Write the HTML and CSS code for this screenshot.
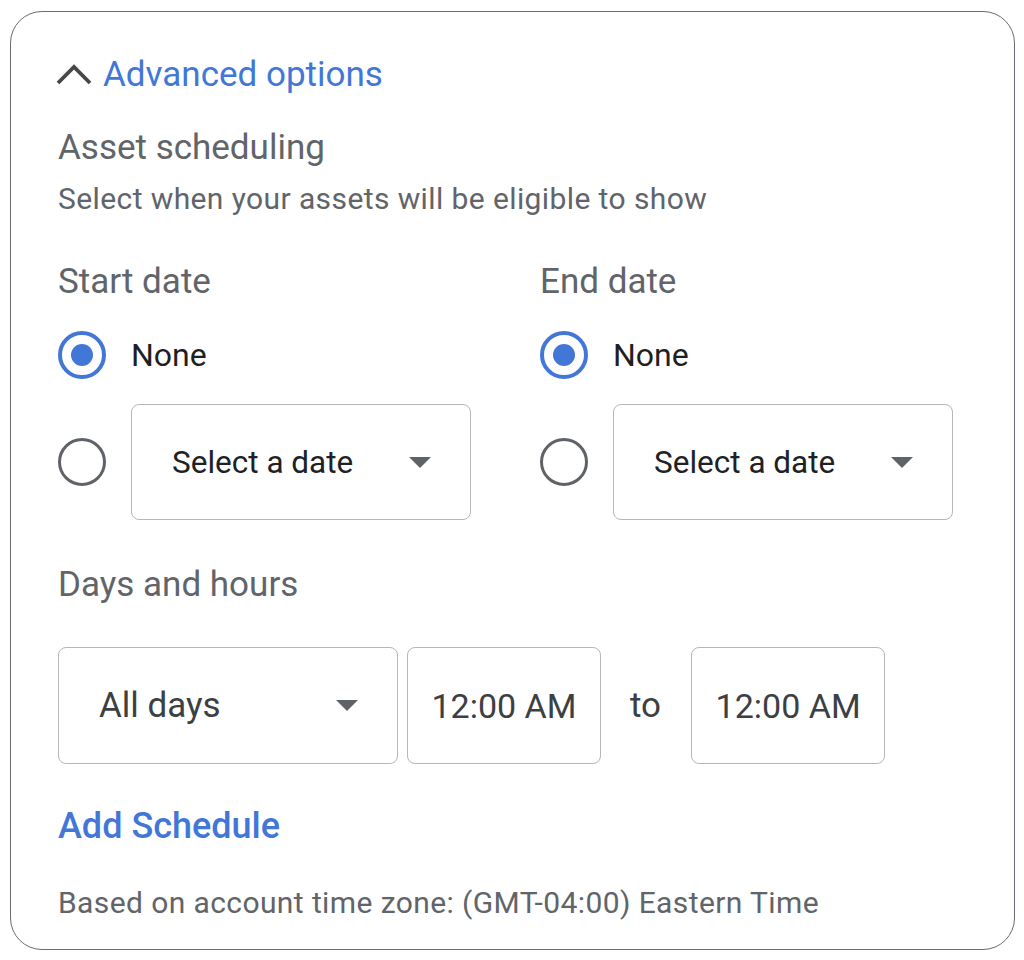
FILE: index.html
```html
<!DOCTYPE html>
<html lang="en">
<head>
    <meta charset="UTF-8">
    <title>Advanced options</title>
    <link rel="stylesheet" href="styles.css">
</head>
<body>
    <div class="card">
        <div class="header">
            <svg class="chevron" width="40" height="24" viewBox="0 0 40 24">
                <polyline points="3,21 19,5 35,21" fill="none" stroke="#474747" stroke-width="3.8"/>
            </svg>
            <span class="link">Advanced options</span>
        </div>

        <div class="title">Asset scheduling</div>
        <div class="subtitle">Select when your assets will be eligible to show</div>

        <div class="dates">
            <div class="date-col">
                <div class="label">Start date</div>
                <div class="radio-row first">
                    <span class="radio checked"></span>
                    <span class="option">None</span>
                </div>
                <div class="radio-row">
                    <span class="radio"></span>
                    <div class="select">
                        <span>Select a date</span>
                        <span class="arrow"></span>
                    </div>
                </div>
            </div>
            <div class="date-col">
                <div class="label">End date</div>
                <div class="radio-row first">
                    <span class="radio checked"></span>
                    <span class="option">None</span>
                </div>
                <div class="radio-row">
                    <span class="radio"></span>
                    <div class="select">
                        <span>Select a date</span>
                        <span class="arrow"></span>
                    </div>
                </div>
            </div>
        </div>

        <div class="label days-label">Days and hours</div>
        <div class="hours">
            <div class="select days">
                <span>All days</span>
                <span class="arrow"></span>
            </div>
            <div class="time">12:00 AM</div>
            <span class="to">to</span>
            <div class="time">12:00 AM</div>
        </div>

        <div class="link add">Add Schedule</div>
        <div class="subtitle footer">Based on account time zone: (GMT-04:00) Eastern Time</div>
    </div>
</body>
</html>
```

FILE: styles.css
```css
* {
    margin: 0;
    padding: 0;
    box-sizing: border-box;
}

body {
    font-family: Roboto, "Liberation Sans", sans-serif;
    background: #fff;
}

.card {
    margin: 11px 9px 0 10px;
    height: 939px;
    border: 1.5px solid #696c73;
    border-radius: 32px;
    padding: 42px 0 0 47px;
}

.header {
    display: flex;
    align-items: center;
    height: 40px;
}

.chevron {
    margin-left: -3px;
    margin-right: 8px;
}

.link {
    color: #4277d8;
    font-size: 35px;
}

.title {
    color: #616469;
    font-size: 35px;
    line-height: 36px;
    margin-top: 36px;
}

.subtitle {
    color: #616469;
    font-size: 30px;
    line-height: 30px;
    letter-spacing: 0.4px;
    margin-top: 18px;
}

.dates {
    display: flex;
}

.date-col {
    flex: none;
    width: 482px;
}

.label {
    color: #616469;
    font-size: 35px;
    line-height: 36px;
    margin-top: 50px;
}

.radio-row {
    display: flex;
    align-items: center;
    gap: 25px;
    margin-top: 25px;
}

.radio-row.first {
    margin-top: 31px;
}

.radio {
    width: 48px;
    height: 48px;
    border-radius: 50%;
    border: 3px solid #5f6368;
    display: flex;
    align-items: center;
    justify-content: center;
    flex-shrink: 0;
}

.radio.checked {
    border: 4px solid #4277d8;
}

.radio.checked::after {
    content: "";
    width: 22px;
    height: 22px;
    border-radius: 50%;
    background: #4277d8;
}

.option {
    color: #1f1f1f;
    font-size: 32px;
}

.select {
    width: 340px;
    height: 116px;
    border: 1.5px solid #b3b6ba;
    border-radius: 8px;
    display: flex;
    align-items: center;
    justify-content: space-between;
    padding: 0 39px 0 40px;
    color: #202124;
    font-size: 31.5px;
}

.arrow {
    width: 0;
    height: 0;
    border-left: 11px solid transparent;
    border-right: 11px solid transparent;
    border-top: 11px solid #5f6368;
}

.days-label {
    margin-top: 47px;
}

.hours {
    display: flex;
    align-items: center;
    margin-top: 44px;
}

.select.days {
    height: 117px;
    color: #3c4043;
    font-size: 35px;
}

.time {
    width: 194px;
    height: 117px;
    margin-left: 9px;
    border: 1.5px solid #b3b6ba;
    border-radius: 8px;
    display: flex;
    align-items: center;
    justify-content: center;
    color: #3c4043;
    font-size: 34px;
}

.to {
    color: #3c4043;
    font-size: 35px;
    margin: 0 30px 0 29px;
}

.to + .time {
    margin-left: 0;
}

.add {
    font-size: 36px;
    font-weight: 500;
    line-height: 36px;
    margin-top: 44px;
}

.footer {
    margin-top: 44px;
}
```
